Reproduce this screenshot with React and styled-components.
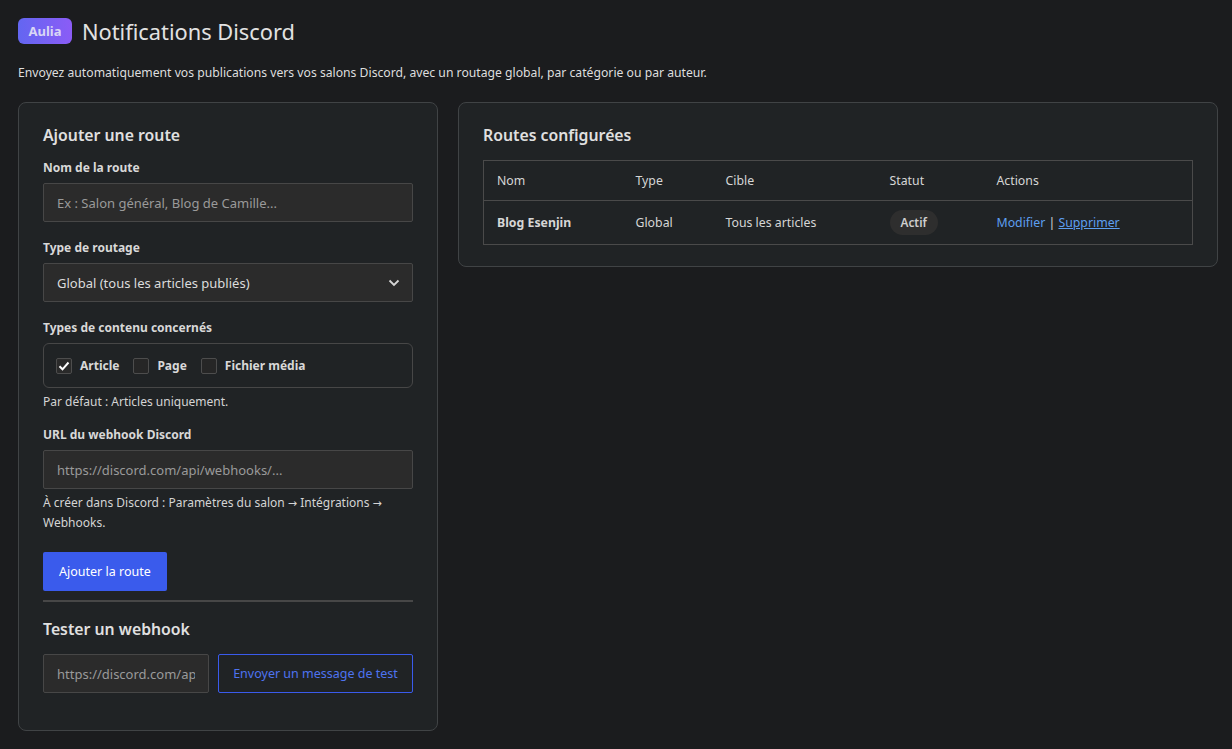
import React from "react";
import styled, { createGlobalStyle } from "styled-components";

const GlobalStyle = createGlobalStyle`
  html, body {
    margin: 0;
    padding: 0;
    background-color: #1b1c1e;
    color: #dcdcdc;
    font-family: "Noto Sans", "Open Sans", sans-serif;
  }
  * {
    box-sizing: border-box;
  }
`;

const Page = styled.div`
  min-height: 749px;
  padding: 18px 14px 18px 18px;
`;

const Header = styled.div`
  display: flex;
  align-items: center;
  gap: 10px;
  height: 26px;
`;

const Badge = styled.span`
  display: inline-flex;
  align-items: center;
  justify-content: center;
  width: 54px;
  height: 26px;
  border-radius: 6px;
  background: linear-gradient(90deg, #6366f1, #8b5cf6);
  color: #d9d6f5;
  font-size: 13px;
  font-weight: 700;
`;

const Title = styled.h1`
  margin: 0;
  font-size: 21.8px;
  font-weight: 400;
  color: #e2e2e2;
`;

const Intro = styled.p`
  margin: 20px 0 20px;
  font-size: 12.2px;
  line-height: 18px;
  color: #dedede;
`;

const Columns = styled.div`
  display: grid;
  grid-template-columns: 420px 1fr;
  gap: 20px;
  align-items: start;
`;

const Card = styled.section`
  background-color: #202325;
  border: 1px solid #404345;
  border-radius: 8px;
  padding: 21px 24px ${(p) => p.$pb || 37}px;
`;

const CardTitle = styled.h2`
  margin: 0 0 ${(p) => p.$mb || 14}px;
  font-size: 15.8px;
  line-height: 22px;
  font-weight: 600;
  color: #e0e0e0;
`;

const Field = styled.div`
  margin-bottom: ${(p) => p.$mb || 17}px;
`;

const Label = styled.label`
  display: block;
  font-size: 12px;
  line-height: 17px;
  font-weight: 700;
  color: #d8d8d8;
  margin-bottom: 7px;
`;

const Input = styled.input`
  width: ${(p) => (p.$w ? `${p.$w}px` : "100%")};
  flex-shrink: 0;
  height: 39px;
  padding: 0 13px;
  background-color: #2b2b2b;
  border: 1px solid #474747;
  border-radius: 2px;
  color: #dcdcdc;
  font-family: inherit;
  font-size: 13px;
  outline: none;
  &::placeholder {
    color: #9a9a9a;
  }
`;

const SelectBox = styled.div`
  height: 39px;
  display: flex;
  align-items: center;
  justify-content: space-between;
  padding: 0 12px 0 13px;
  background-color: #2b2b2b;
  border: 1px solid #474747;
  border-radius: 2px;
  font-size: 13px;
  color: #dcdcdc;
`;

const Fieldset = styled.div`
  display: flex;
  align-items: center;
  gap: 14px;
  height: 45px;
  padding: 0 12px;
  border: 1px solid #474747;
  border-radius: 6px;
`;

const Check = styled.label`
  display: flex;
  align-items: center;
  gap: 8px;
  font-size: 12px;
  font-weight: 700;
  color: #d8d8d8;
`;

const Box = styled.span`
  width: 16px;
  height: 16px;
  border: 1px solid #4d4d4d;
  border-radius: 2px;
  background-color: ${(p) => (p.$checked ? "#2a2a2a" : "#262626")};
  display: flex;
  align-items: center;
  justify-content: center;
`;

const Help = styled.p`
  margin: 4px 0 0;
  font-size: 12px;
  line-height: 20px;
  color: #d4d4d4;
`;

const Arrow = styled.span`
  font-family: "DejaVu Sans", sans-serif;
  font-size: 11px;
  line-height: 1;
`;

const PrimaryButton = styled.button`
  display: block;
  height: 39px;
  padding: 0 16px;
  background-color: #3a5bec;
  border: none;
  border-radius: 2px;
  color: #ffffff;
  font-family: inherit;
  font-size: 12.5px;
  cursor: pointer;
`;

const Divider = styled.hr`
  margin: 9px 0 16px;
  border: none;
  height: 2px;
  background-color: #474747;
`;

const TestRow = styled.div`
  display: flex;
  gap: 9px;
`;

const OutlineButton = styled.button`
  flex: 1;
  height: 39px;
  background-color: transparent;
  border: 1px solid #3a5bec;
  border-radius: 2px;
  color: #4e73f0;
  font-family: inherit;
  font-size: 12.5px;
  cursor: pointer;
`;

const Table = styled.table`
  width: 100%;
  border-collapse: collapse;
  border: 1px solid #4a4a4a;
  font-size: 12.3px;
`;

const Th = styled.th`
  text-align: left;
  font-weight: 400;
  color: #d6d6d6;
  height: 40px;
  padding: 0 13px;
  border-bottom: 1px solid #4a4a4a;
  width: ${(p) => (p.$w ? `${p.$w}px` : "auto")};
`;

const Td = styled.td`
  height: 44px;
  padding: 0 13px;
  color: #d6d6d6;
  font-weight: ${(p) => (p.$bold ? 700 : 400)};
`;

const Status = styled.span`
  display: inline-block;
  padding: 4px 11px;
  line-height: 17px;
  border-radius: 13px;
  background-color: #2e2e2e;
  font-size: 11.8px;
  font-weight: 600;
  color: #cfcfcf;
`;

const LinkText = styled.a`
  color: #5e9ff0;
  text-decoration: ${(p) => (p.$underline ? "underline" : "none")};
  cursor: pointer;
`;

const Chevron = () => (
  <svg width="12" height="8" viewBox="0 0 12 8" fill="none">
    <path d="M1.5 1.5 6 6l4.5-4.5" stroke="#d6d6d6" strokeWidth="1.8" />
  </svg>
);

const CheckMark = () => (
  <svg width="12" height="10" viewBox="0 0 12 10" fill="none">
    <path d="M1.5 5.2 4.5 8.3 10.5 1.5" stroke="#ffffff" strokeWidth="2" />
  </svg>
);

export default function App() {
  return (
    <Page>
      <GlobalStyle />
      <Header>
        <Badge>Aulia</Badge>
        <Title>Notifications Discord</Title>
      </Header>
      <Intro>
        Envoyez automatiquement vos publications vers vos salons Discord, avec
        un routage global, par catégorie ou par auteur.
      </Intro>

      <Columns>
        <Card>
          <CardTitle $mb={13}>Ajouter une route</CardTitle>
          <Field>
            <Label>Nom de la route</Label>
            <Input placeholder="Ex : Salon général, Blog de Camille..." />
          </Field>
          <Field>
            <Label>Type de routage</Label>
            <SelectBox>
              <span>Global (tous les articles publiés)</span>
              <Chevron />
            </SelectBox>
          </Field>
          <Field $mb={14}>
            <Label>Types de contenu concernés</Label>
            <Fieldset>
              <Check>
                <Box $checked>
                  <CheckMark />
                </Box>
                Article
              </Check>
              <Check>
                <Box />
                Page
              </Check>
              <Check>
                <Box />
                Fichier média
              </Check>
            </Fieldset>
            <Help>Par défaut : Articles uniquement.</Help>
          </Field>
          <Field $mb={19}>
            <Label>URL du webhook Discord</Label>
            <Input placeholder="https://discord.com/api/webhooks/..." />
            <Help>
              À créer dans Discord : Paramètres du salon <Arrow>→</Arrow>{" "}
              Intégrations <Arrow>→</Arrow> Webhooks.
            </Help>
          </Field>
          <PrimaryButton>Ajouter la route</PrimaryButton>
          <Divider />
          <CardTitle $mb={14}>Tester un webhook</CardTitle>
          <TestRow>
            <Input $w={166} placeholder="https://discord.com/api/webhooks/..." />
            <OutlineButton>Envoyer un message de test</OutlineButton>
          </TestRow>
        </Card>

        <Card $pb={21}>
          <CardTitle $mb={14}>Routes configurées</CardTitle>
          <Table>
            <thead>
              <tr>
                <Th $w={139}>Nom</Th>
                <Th $w={90}>Type</Th>
                <Th $w={164}>Cible</Th>
                <Th $w={107}>Statut</Th>
                <Th>Actions</Th>
              </tr>
            </thead>
            <tbody>
              <tr>
                <Td $bold>Blog Esenjin</Td>
                <Td>Global</Td>
                <Td>Tous les articles</Td>
                <Td>
                  <Status>Actif</Status>
                </Td>
                <Td>
                  <LinkText>Modifier</LinkText> |{" "}
                  <LinkText $underline>Supprimer</LinkText>
                </Td>
              </tr>
            </tbody>
          </Table>
        </Card>
      </Columns>
    </Page>
  );
}
